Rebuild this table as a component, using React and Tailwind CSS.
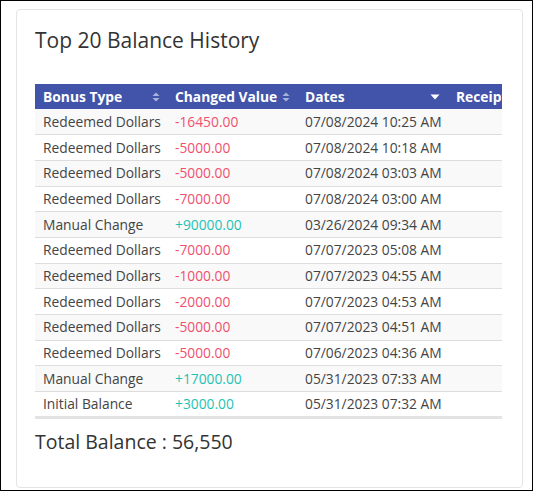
const rows = [
  { type: "Redeemed Dollars", value: "-16450.00", date: "07/08/2024 10:25 AM" },
  { type: "Redeemed Dollars", value: "-5000.00", date: "07/08/2024 10:18 AM" },
  { type: "Redeemed Dollars", value: "-5000.00", date: "07/08/2024 03:03 AM" },
  { type: "Redeemed Dollars", value: "-7000.00", date: "07/08/2024 03:00 AM" },
  { type: "Manual Change", value: "+90000.00", date: "03/26/2024 09:34 AM" },
  { type: "Redeemed Dollars", value: "-7000.00", date: "07/07/2023 05:08 AM" },
  { type: "Redeemed Dollars", value: "-1000.00", date: "07/07/2023 04:55 AM" },
  { type: "Redeemed Dollars", value: "-2000.00", date: "07/07/2023 04:53 AM" },
  { type: "Redeemed Dollars", value: "-5000.00", date: "07/07/2023 04:51 AM" },
  { type: "Redeemed Dollars", value: "-5000.00", date: "07/06/2023 04:36 AM" },
  { type: "Manual Change", value: "+17000.00", date: "05/31/2023 07:33 AM" },
  { type: "Initial Balance", value: "+3000.00", date: "05/31/2023 07:32 AM" },
];

const SortBoth = () => (
  <svg width="8" height="10" viewBox="0 0 8 10" className="shrink-0">
    <path d="M4 0.5 L7.5 4 H0.5 Z" fill="#aab3dc" />
    <path d="M4 9.5 L7.5 6 H0.5 Z" fill="#aab3dc" />
  </svg>
);

const SortDesc = () => (
  <svg width="10" height="6" viewBox="0 0 10 6" className="shrink-0">
    <path d="M0.5 0.5 H9.5 L5 5.5 Z" fill="#ffffff" />
  </svg>
);

const App = () => {
  return (
    <div
      className="w-[533px] h-[491px] border border-black bg-white pt-[8px] pl-[15px] pr-[10px]"
      style={{ fontFamily: '"Open Sans", sans-serif' }}
    >
      {/* card */}
      <div className="w-[507px] h-[479px] border border-[#e4e4e4] rounded-[4px] px-[18px] pt-[16px]">
        <h2 className="text-[21px] leading-[28px] text-[#333] font-normal">
          Top 20 Balance History
        </h2>

        <div className="mt-[30px] w-[467px] overflow-hidden">
          <table className="table-fixed border-collapse w-[560px] text-[13.8px] text-[#444]">
            <colgroup>
              <col className="w-[132px]" />
              <col className="w-[130px]" />
              <col className="w-[151px]" />
              <col className="w-[147px]" />
            </colgroup>
            <thead>
              <tr className="bg-[#4254aa] text-white">
                <th className="h-[25px] pl-2 pr-[7px] text-left font-bold leading-[20px] whitespace-nowrap">
                  <div className="flex items-center justify-between">
                    <span>Bonus Type</span>
                    <SortBoth />
                  </div>
                </th>
                <th className="h-[25px] pl-2 pr-[7px] text-left font-bold leading-[20px] whitespace-nowrap">
                  <div className="flex items-center justify-between">
                    <span>Changed Value</span>
                    <SortBoth />
                  </div>
                </th>
                <th className="h-[25px] pl-2 pr-[8px] text-left font-bold leading-[20px] whitespace-nowrap">
                  <div className="flex items-center justify-between">
                    <span>Dates</span>
                    <SortDesc />
                  </div>
                </th>
                <th className="h-[25px] px-2 text-left font-bold leading-[20px] whitespace-nowrap">
                  Receipt No
                </th>
              </tr>
            </thead>
            <tbody>
              {rows.map((r, i) => (
                <tr
                  key={i}
                  className={`${i % 2 === 0 ? "bg-[#f9f9f9]" : "bg-white"} ${
                    i > 0 ? "border-t border-[#dddddd]" : ""
                  } ${i === rows.length - 1 ? "border-b-[3px] border-b-[#e3e3e3]" : ""}`}
                >
                  <td className="h-[25.7px] px-2 leading-[20px] whitespace-nowrap">
                    {r.type}
                  </td>
                  <td
                    className={`h-[25.7px] px-2 leading-[20px] whitespace-nowrap ${
                      r.value.startsWith("-") ? "text-[#f0506e]" : "text-[#1fc2b2]"
                    }`}
                  >
                    {r.value}
                  </td>
                  <td className="h-[25.7px] px-2 leading-[20px] whitespace-nowrap">
                    {r.date}
                  </td>
                  <td className="h-[25.7px] px-2 leading-[20px]"></td>
                </tr>
              ))}
            </tbody>
          </table>
        </div>

        <div className="mt-[9px] text-[19.5px] leading-[28px] text-[#333]">
          Total Balance : 56,550
        </div>
      </div>
    </div>
  );
};

export default App;
